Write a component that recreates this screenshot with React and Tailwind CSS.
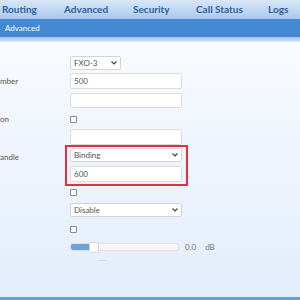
const inputCls = "w-[112px] bg-white border border-[#dcdcdc] rounded-[2px] flex items-center px-[3px]";
const selectBase = "h-[14px] bg-white border border-[#d4d4d4] rounded-[2px] flex items-center justify-between px-[3px]";
const boxCls = "w-[7px] h-[7px] bg-white border border-[#888] rounded-[1px]";

function Row({ h, label, children, align = "items-center", labelPad = "" }) {
  return (
    <div className={`flex ${align} ${h}`}>
      <div className={`w-[70px] shrink-0 text-[8px] text-[#555] ${labelPad}`}>{label}</div>
      <div className="flex items-center">{children}</div>
    </div>
  );
}

function Chevron() {
  return (
    <svg width="6" height="4" viewBox="0 0 6 4">
      <path d="M0.5 0.5 L3 3 L5.5 0.5" fill="none" stroke="#444" strokeWidth="1.2" />
    </svg>
  );
}

export default function App() {
  const font = { fontFamily: "Lato, 'Open Sans', sans-serif" };
  return (
    <div className="w-[300px] h-[300px] overflow-hidden flex flex-col bg-gradient-to-b from-[#fcfdff] to-[#e2edfb]" style={font}>
      <div className="h-[19px] shrink-0 bg-gradient-to-b from-[#d9e7f7] to-[#a9c8ec] flex items-center pl-[2px] text-[10px] font-bold text-[#2d5f9e] whitespace-nowrap">
        <span className="w-[62px]">Routing</span>
        <span className="w-[69px]">Advanced</span>
        <span className="w-[63px]">Security</span>
        <span className="w-[72px]">Call Status</span>
        <span>Logs</span>
      </div>
      <div className="h-[18px] shrink-0 bg-[#4388d0] flex items-center pl-[5px] text-[8px] text-white">Advanced</div>
      <div className="h-[5px] shrink-0 bg-gradient-to-b from-[#9fc1ea] to-[#d6e5f7]"></div>

      <div className="flex-1 flex flex-col pt-[12px] text-[8px] text-[#555]">
        <Row h="h-[18px]">
          <div className={selectBase + " w-[51px]"}>
            <span>FXO-3</span>
            <Chevron />
          </div>
        </Row>
        <Row h="h-[18px]" label="mber">
          <div className={inputCls + " h-[16px]"}>500</div>
        </Row>
        <Row h="h-[20px]">
          <div className={inputCls + " h-[15px]"}></div>
        </Row>
        <Row h="h-[18px]" label="on">
          <div className={boxCls}></div>
        </Row>
        <Row h="h-[17px]">
          <div className={inputCls + " h-[16px]"}></div>
        </Row>
        <Row h="h-[41px]" label="andle" align="items-start" labelPad="pt-[6px]">
          <div className="-ml-[5px] border-2 border-[#e0313c] pt-[1px] pb-[2px] pl-[3px] pr-[4px] flex flex-col gap-[4px]">
            <div className={selectBase + " w-[112px]"}>
              <span>Binding</span>
              <Chevron />
            </div>
            <div className={inputCls + " h-[16px]"}>600</div>
          </div>
        </Row>
        <Row h="h-[13px]">
          <div className={boxCls}></div>
        </Row>
        <Row h="h-[22px]">
          <div className={selectBase + " w-[112px]"}>
            <span>Disable</span>
            <Chevron />
          </div>
        </Row>
        <Row h="h-[17px]">
          <div className={boxCls}></div>
        </Row>
        <Row h="h-[18px]">
          <div className="relative w-[109px] h-[8px] bg-[#f7f7f7] border border-[#e0e0e0] rounded-[2px]">
            <div className="w-[20px] h-full bg-[#6f9fe0] rounded-l-[2px]"></div>
            <div className="absolute left-[18px] -top-[2px] w-[10px] h-[11px] bg-white border border-[#d8d8d8] rounded-[2px]"></div>
          </div>
          <span className="ml-[6px] text-[#777]">0.0</span>
          <span className="ml-[9px] text-[#777]">dB</span>
        </Row>
        <div className="ml-[98px] mt-[4px] w-[9px] h-px bg-[#d8dde4]"></div>
      </div>
      <div className="h-[3px] shrink-0 bg-[#6b9fdc]"></div>
    </div>
  );
}
